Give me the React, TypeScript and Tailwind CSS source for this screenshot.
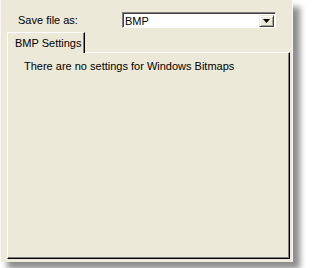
import { useState } from "react"

const font = "font-['Liberation_Sans',Arial,sans-serif] text-[11px] leading-[13px] text-black"

function ComboBox({ value }: { value: string }) {
  return (
    <div className="flex h-[16px] w-[154px] border-t border-l border-t-[#808080] border-l-[#808080] border-b border-r border-b-white border-r-white">
      <div className="flex flex-1 items-center border-t border-l border-t-[#404040] border-l-[#404040] bg-white pr-[1px]">
        <span className="flex-1 pl-[1px] pt-[1px]">{value}</span>
        <div className="flex h-[12px] w-[15px] items-center justify-center border-t border-l border-t-[#ece9d8] border-l-[#ece9d8] border-b border-r border-b-[#404040] border-r-[#404040] bg-[#ece9d8] shadow-[inset_1px_1px_0_#fff,inset_-1px_-1px_0_#aca899]">
          <svg width="7" height="4" viewBox="0 0 7 4">
            <path d="M0 0h7L3.5 4z" fill="#000" />
          </svg>
        </div>
      </div>
    </div>
  )
}

export default function App() {
  const [format] = useState("BMP")

  return (
    <div className={`h-[268px] w-[308px] bg-white ${font}`}>
      <div className="flex h-[262px] w-[293px] flex-col border-l border-r border-l-[#f7f6f0] border-r-[#f7f6f0] bg-[#ece9d8] shadow-[7px_7px_6px_rgba(0,0,0,0.45)]">
        <div className="mt-[12px] flex h-[16px] items-center">
          <span className="w-[121px] pl-[17px]">Save file as:</span>
          <ComboBox value={format} />
        </div>

        <div className="relative z-10 ml-[6px] mt-[4px] -mb-[1px] flex">
          <div className="flex h-[21px] w-[78px] items-center rounded-tl-[2px] border-t border-l border-t-white border-l-white border-r border-r-black bg-[#ece9d8] pl-[7px] shadow-[inset_-1px_0_0_#808080]">
            BMP Settings
          </div>
        </div>

        <div className="ml-[6px] h-[207px] w-[283px] border-t border-l border-t-white border-l-white border-b border-r border-b-black border-r-black pl-[16px] pt-[7px] shadow-[inset_-1px_-1px_0_#808080]">
          <p>There are no settings for Windows Bitmaps</p>
        </div>
      </div>
    </div>
  )
}
